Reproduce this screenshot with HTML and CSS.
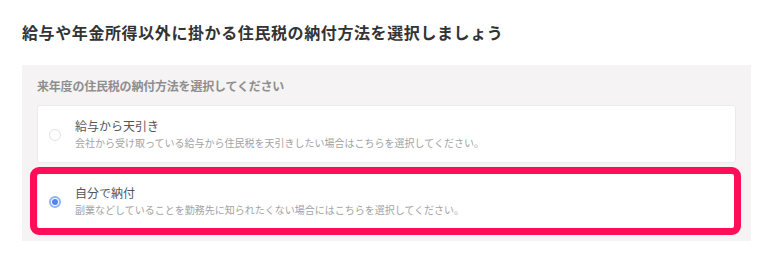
FILE: index.html
```html
<!DOCTYPE html>
<html lang="ja">
<head>
<meta charset="utf-8">
<link rel="stylesheet" href="styles.css">
</head>
<body>
<div class="page">
  <h1 class="title">給与や年金所得以外に掛かる住民税の納付方法を選択しましょう</h1>
  <section class="panel">
    <p class="panel-head">来年度の住民税の納付方法を選択してください</p>
    <div class="options">
      <label class="option">
        <span class="radio"></span>
        <span class="texts">
          <span class="opt-label">給与から天引き</span>
          <span class="opt-desc">会社から受け取っている給与から住民税を天引きしたい場合はこちらを選択してください。</span>
        </span>
      </label>
      <label class="option option-selected">
        <span class="radio radio-on"></span>
        <span class="texts">
          <span class="opt-label">自分で納付</span>
          <span class="opt-desc">副業などしていることを勤務先に知られたくない場合にはこちらを選択してください。</span>
        </span>
      </label>
    </div>
  </section>
</div>
</body>
</html>
```
FILE: styles.css
```css
* { box-sizing: border-box; }
html, body {
  margin: 0;
  padding: 0;
  background: #ffffff;
}
body {
  font-family: "Noto Sans CJK JP", "Noto Sans", sans-serif;
  width: 774px;
  height: 269px;
  overflow: hidden;
}
.page {
  padding: 20px 23px 0 22px;
}
.title {
  margin: 0;
  font-size: 16px;
  line-height: 24px;
  font-weight: 700;
  letter-spacing: 0.6px;
  color: #333333;
}
.panel {
  margin-top: 21px;
  background: #f5f3f4;
  padding: 12px 15px 11px 15px;
  height: 176px;
}
.panel-head {
  margin: 0 0 10px 0;
  font-size: 12px;
  line-height: 18px;
  font-weight: 700;
  letter-spacing: -0.2px;
  color: #8e8e8e;
}
.options {
  display: flex;
  flex-direction: column;
  gap: 9px;
}
.option {
  position: relative;
  display: flex;
  align-items: center;
  height: 58px;
  background: #ffffff;
  border: 1px solid #ebebeb;
  border-radius: 3px;
  padding: 0 0 0 11px;
}
.option-selected::after {
  content: "";
  position: absolute;
  left: -8px;
  right: -6px;
  top: -6px;
  bottom: -6px;
  border: 7px solid #fe0e59;
  border-radius: 9px;
  pointer-events: none;
}
.radio {
  width: 12px;
  height: 12px;
  border-radius: 50%;
  border: 1px solid #e2e2e2;
  background: #ffffff;
  flex: none;
  margin-top: 2px;
  position: relative;
}
.radio-on {
  border: 2px solid #8fb3f5;
}
.radio-on::after {
  content: "";
  position: absolute;
  left: 1px;
  top: 1px;
  width: 6px;
  height: 6px;
  border-radius: 50%;
  background: #4f86ee;
}
.texts {
  display: flex;
  flex-direction: column;
  margin-left: 14px;
}
.opt-label {
  font-size: 12px;
  line-height: 18px;
  color: #555555;
}
.opt-desc {
  font-size: 10px;
  line-height: 16px;
  color: #a3a3a3;
}
```
